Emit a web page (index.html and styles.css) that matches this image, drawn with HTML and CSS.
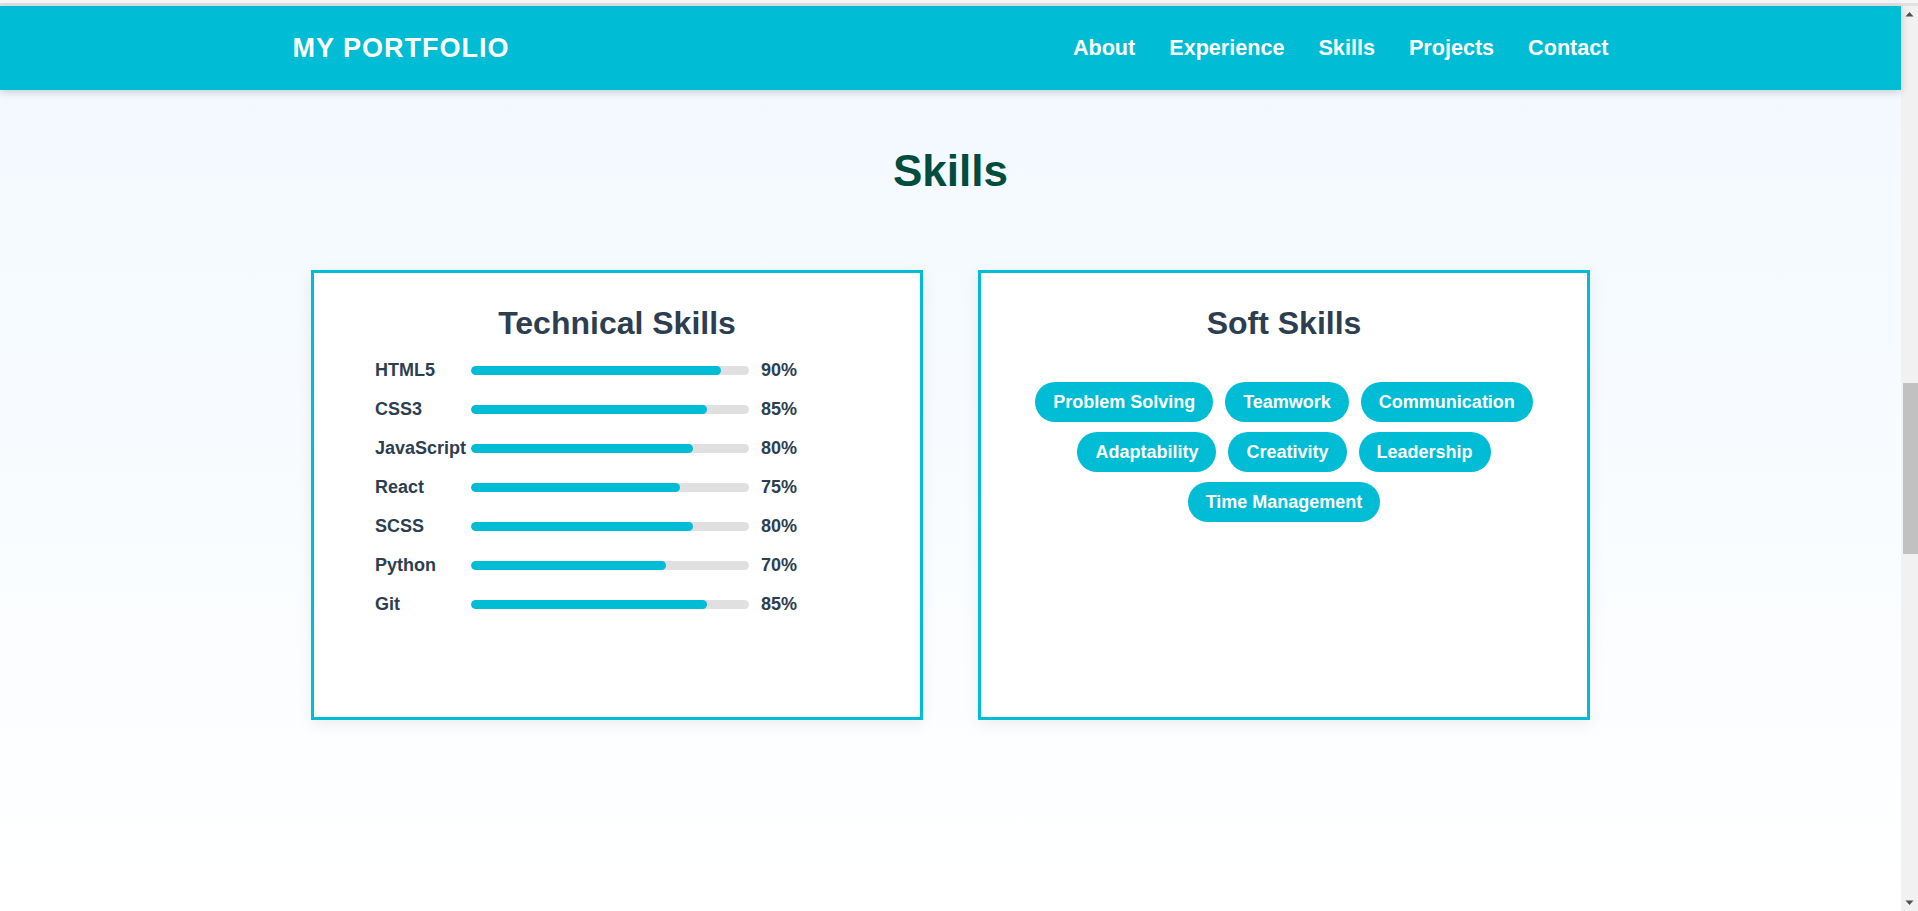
FILE: index.html
```html
<!DOCTYPE html>
<html lang="en">
<head>
<meta charset="utf-8">
<title>My Portfolio - Skills</title>
<link rel="stylesheet" href="styles.css">
</head>
<body>
<div class="topstrip"></div>
<div class="window">
  <div class="page">
    <header class="site-header">
      <div class="header-inner">
        <div class="logo">MY PORTFOLIO</div>
        <nav class="nav">
          <a href="#about">About</a>
          <a href="#experience">Experience</a>
          <a href="#skills">Skills</a>
          <a href="#projects">Projects</a>
          <a href="#contact">Contact</a>
        </nav>
      </div>
    </header>
    <main class="skills-section" id="skills">
      <h2 class="section-title">Skills</h2>
      <div class="cards">
        <section class="card">
          <h3 class="card-title">Technical Skills</h3>
          <div class="skill-list">
            <div class="skill-row"><span class="skill-name">HTML5</span><span class="bar"><span class="fill" style="width:90%"></span></span><span class="pct">90%</span></div>
            <div class="skill-row"><span class="skill-name">CSS3</span><span class="bar"><span class="fill" style="width:85%"></span></span><span class="pct">85%</span></div>
            <div class="skill-row"><span class="skill-name">JavaScript</span><span class="bar"><span class="fill" style="width:80%"></span></span><span class="pct">80%</span></div>
            <div class="skill-row"><span class="skill-name">React</span><span class="bar"><span class="fill" style="width:75%"></span></span><span class="pct">75%</span></div>
            <div class="skill-row"><span class="skill-name">SCSS</span><span class="bar"><span class="fill" style="width:80%"></span></span><span class="pct">80%</span></div>
            <div class="skill-row"><span class="skill-name">Python</span><span class="bar"><span class="fill" style="width:70%"></span></span><span class="pct">70%</span></div>
            <div class="skill-row"><span class="skill-name">Git</span><span class="bar"><span class="fill" style="width:85%"></span></span><span class="pct">85%</span></div>
          </div>
        </section>
        <section class="card">
          <h3 class="card-title">Soft Skills</h3>
          <div class="tags">
            <span class="tag">Problem Solving</span>
            <span class="tag">Teamwork</span>
            <span class="tag">Communication</span>
            <span class="tag">Adaptability</span>
            <span class="tag">Creativity</span>
            <span class="tag">Leadership</span>
            <span class="tag">Time Management</span>
          </div>
        </section>
      </div>
    </main>
  </div>
  <div class="scrollbar" aria-hidden="true">
    <div class="sb-btn"><svg width="17" height="17" viewBox="0 0 17 17"><polygon points="4.5,10.5 12.5,10.5 8.5,6" fill="#505050"/></svg></div>
    <div class="sb-track"><div class="sb-thumb"></div></div>
    <div class="sb-btn"><svg width="17" height="17" viewBox="0 0 17 17"><polygon points="4.5,6.5 12.5,6.5 8.5,11" fill="#505050"/></svg></div>
  </div>
</div>
</body>
</html>
```
FILE: styles.css
```css
* {
  box-sizing: border-box;
}

html, body {
  margin: 0;
  padding: 0;
}

body {
  height: 911px;
  overflow: hidden;
  display: flex;
  flex-direction: column;
  font-family: "Liberation Sans", Arial, sans-serif;
  background: #ffffff;
}

.topstrip {
  height: 6px;
  flex-shrink: 0;
  background: #f6f6f6;
  border-bottom: 3px solid #e2e2e2;
}

.window {
  flex: 1;
  display: flex;
  min-height: 0;
}

.page {
  flex: 1;
  display: flex;
  flex-direction: column;
  background: linear-gradient(180deg, #f1f8fe 0%, #ffffff 100%);
  min-width: 0;
}

.site-header {
  height: 84px;
  flex-shrink: 0;
  background: #00bcd4;
  box-shadow: 0 2px 8px rgba(0, 0, 0, 0.18);
  position: relative;
  z-index: 1;
}

.header-inner {
  width: 1316px;
  height: 100%;
  margin: 0 auto;
  display: flex;
  align-items: center;
  justify-content: space-between;
}

.logo {
  color: #ffffff;
  font-size: 27px;
  font-weight: 700;
  letter-spacing: 1px;
}

.nav {
  display: flex;
  gap: 34px;
}

.nav a {
  color: #ffffff;
  text-decoration: none;
  font-size: 21.6px;
  font-weight: 700;
}

.skills-section {
  flex: 1;
  padding-top: 56px;
}

.section-title {
  margin: 0 0 74px;
  text-align: center;
  font-size: 44px;
  font-weight: 700;
  color: #004d40;
}

.cards {
  display: grid;
  grid-template-columns: 612px 612px;
  column-gap: 55px;
  justify-content: center;
}

.card {
  height: 450px;
  background: #ffffff;
  border: 3px solid #00bcd4;
  box-shadow: 0 4px 14px rgba(0, 0, 0, 0.07);
  padding-top: 32px;
}

.card-title {
  margin: 0 0 18px;
  text-align: center;
  font-size: 32px;
  font-weight: 700;
  color: #2c3e50;
}

.skill-list {
  display: flex;
  flex-direction: column;
  gap: 18px;
  padding-left: 61px;
}

.skill-row {
  display: grid;
  grid-template-columns: 96px 278px auto;
  align-items: center;
  line-height: 21px;
  font-size: 18px;
  font-weight: 700;
  color: #2c3e50;
}

.skill-name {
  white-space: nowrap;
}

.bar {
  display: block;
  height: 9px;
  background: #e0e0e0;
  border-radius: 5px;
  overflow: hidden;
}

.fill {
  display: block;
  height: 100%;
  background: #00bcd4;
  border-radius: 5px;
}

.pct {
  margin-left: 12px;
}

.tags {
  margin-top: 40px;
  padding: 0 32px;
  display: flex;
  flex-wrap: wrap;
  justify-content: center;
  gap: 10px 12px;
}

.tag {
  background: #00bcd4;
  color: #ffffff;
  font-size: 18px;
  font-weight: 700;
  line-height: 22px;
  padding: 9px 18px;
  border-radius: 20px;
}

.scrollbar {
  width: 17px;
  flex-shrink: 0;
  display: flex;
  flex-direction: column;
  background: #f1f1f1;
}

.sb-btn {
  height: 17px;
  flex-shrink: 0;
  display: flex;
}

.sb-track {
  flex: 1;
  display: flex;
  flex-direction: column;
}

.sb-thumb {
  margin-top: 360px;
  height: 171px;
  margin-left: 2px;
  background: #c1c1c1;
}
```
